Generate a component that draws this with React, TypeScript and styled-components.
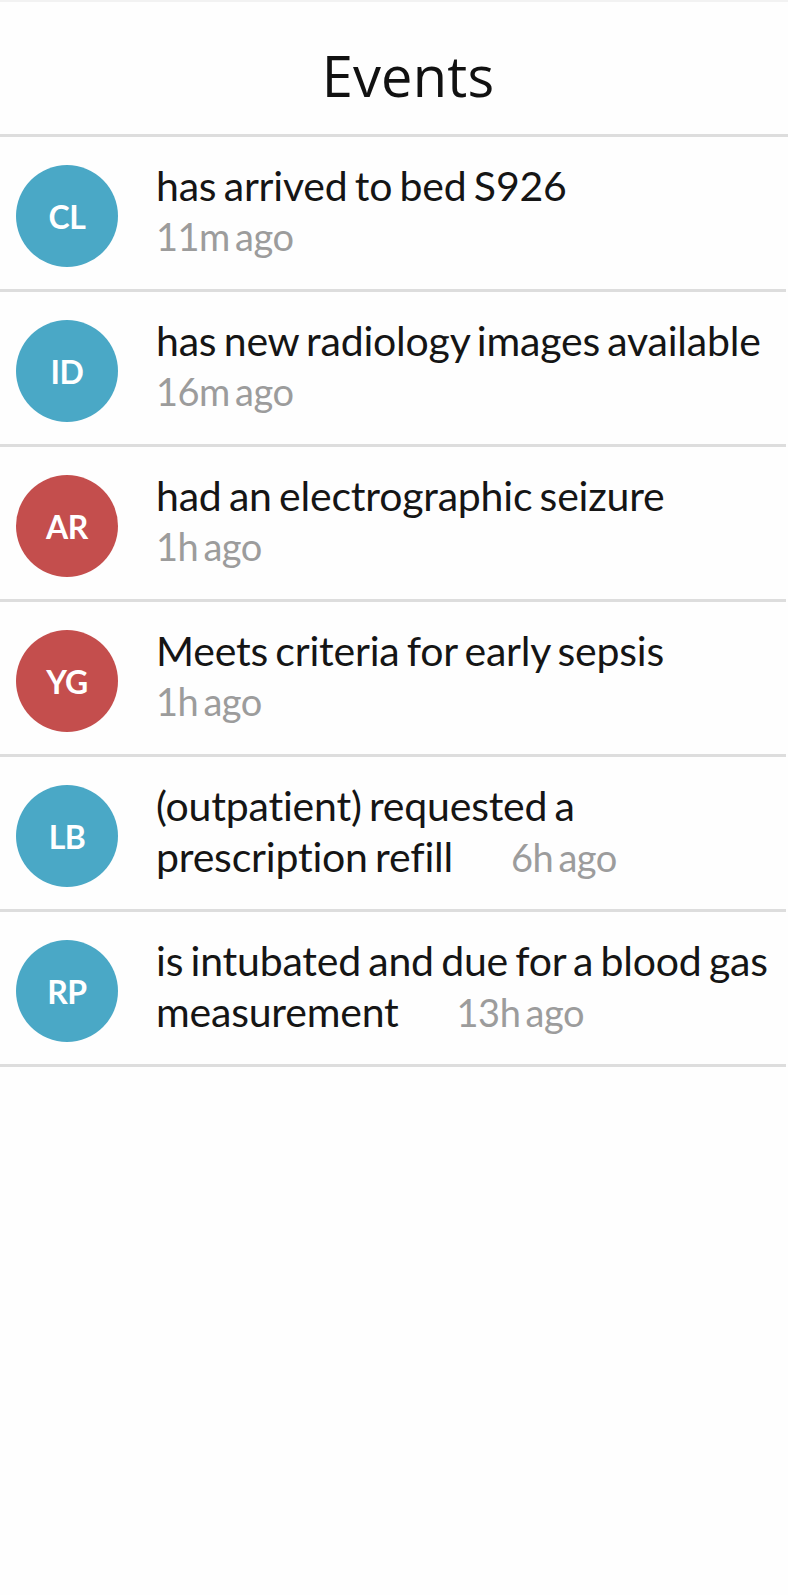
import React from "react";
import styled, { createGlobalStyle } from "styled-components";

const GlobalStyle = createGlobalStyle`
  html, body {
    margin: 0;
    padding: 0;
    background: #ffffff;
  }
  body {
    font-family: Lato, "Open Sans", sans-serif;
  }
  * { box-sizing: border-box; }
`;

const Page = styled.div`
  width: 100%;
  min-height: 1595px;
  background: #fefefe;
  border-top: 2px solid #f2f2f2;
`;

const Header = styled.header`
  height: 135px;
  display: flex;
  align-items: center;
  justify-content: center;
  border-bottom: 3px solid #dddddd;
  padding-top: 14px;
  padding-left: 28px;
`;

const Title = styled.h1`
  margin: 0;
  font-family: "Open Sans", "Noto Sans", sans-serif;
  font-weight: 400;
  font-size: 56px;
  color: #111111;
  letter-spacing: 0.2px;
`;

const List = styled.ul`
  list-style: none;
  margin: 0;
  padding: 0;
  width: 786px;
`;

const Row = styled.li`
  height: 155px;
  display: flex;
  align-items: center;
  padding-left: 16px;
  padding-right: 8px;
  border-bottom: 3px solid #dddddd;
`;

const Avatar = styled.div<{ $tone: "blue" | "red" }>`
  flex: 0 0 102px;
  width: 102px;
  height: 102px;
  margin-top: 6px;
  border-radius: 50%;
  background: ${(p) => (p.$tone === "red" ? "#c44e4d" : "#4aa8c6")};
  color: #ffffff;
  display: flex;
  align-items: center;
  justify-content: center;
  font-family: Lato, sans-serif;
  font-weight: 700;
  font-size: 32px;
  letter-spacing: -0.5px;
`;

const Body = styled.div`
  flex: 1;
  margin-left: 38px;
  margin-top: -4px;
  font-family: Lato, sans-serif;
  font-size: 41px;
  line-height: 51px;
  color: #151515;
  word-spacing: -3px;
  letter-spacing: -0.2px;
`;

const Time = styled.span<{ $block?: boolean }>`
  color: #9c9c9c;
  font-size: 38px;
  display: ${(p) => (p.$block ? "block" : "inline")};
  margin-left: ${(p) => (p.$block ? "0" : "58px")};
  letter-spacing: -0.5px;
  word-spacing: -4px;
`;

type EventItem = {
  initials: string;
  tone: "blue" | "red";
  text: string;
  time: string;
  inline?: boolean;
};

const events: EventItem[] = [
  { initials: "CL", tone: "blue", text: "has arrived to bed S926", time: "11m ago" },
  { initials: "ID", tone: "blue", text: "has new radiology images available", time: "16m ago" },
  { initials: "AR", tone: "red", text: "had an electrographic seizure", time: "1h ago" },
  { initials: "YG", tone: "red", text: "Meets criteria for early sepsis", time: "1h ago" },
  { initials: "LB", tone: "blue", text: "(outpatient) requested a prescription refill", time: "6h ago", inline: true },
  { initials: "RP", tone: "blue", text: "is intubated and due for a blood gas measurement", time: "13h ago", inline: true },
];

export default function App() {
  return (
    <>
      <GlobalStyle />
      <Page>
        <Header>
          <Title>Events</Title>
        </Header>
        <List>
          {events.map((e) => (
            <Row key={e.initials}>
              <Avatar $tone={e.tone}>{e.initials}</Avatar>
              <Body>
                {e.text}
                <Time $block={!e.inline}>{e.time}</Time>
              </Body>
            </Row>
          ))}
        </List>
      </Page>
    </>
  );
}
